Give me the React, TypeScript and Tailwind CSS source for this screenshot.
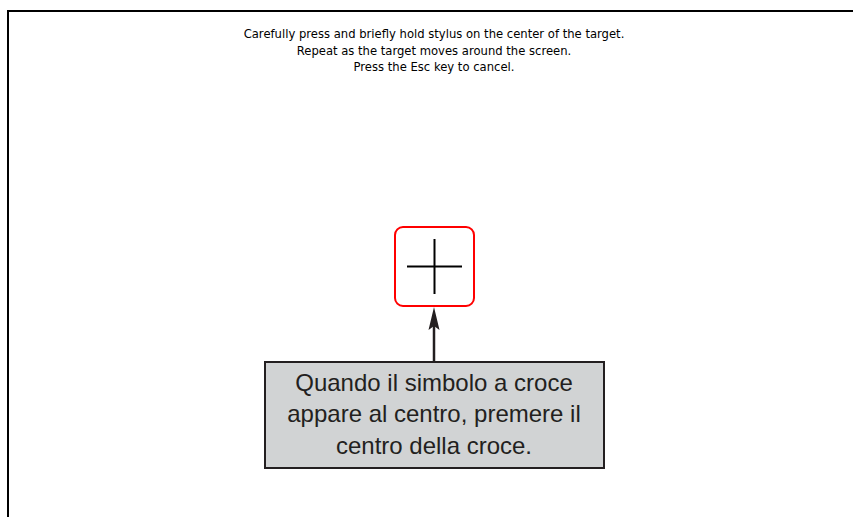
import React from "react";

export default function App() {
  return (
    <div className="w-[853px] h-[517px] bg-white pt-[10px] pl-[7px] overflow-hidden">
      <div className="h-full border-t-2 border-l-2 border-black flex flex-col items-center pl-[6px]">
        <div
          className="mt-[14px] text-center text-[11.6px] leading-[16.5px] text-black"
          style={{ fontFamily: '"DejaVu Sans", Verdana, sans-serif' }}
        >
          <div>Carefully press and briefly hold stylus on the center of the target.</div>
          <div>Repeat as the target moves around the screen.</div>
          <div>Press the Esc key to cancel.</div>
        </div>

        <div className="mt-[150px] w-[81px] h-[81px] border-2 border-[#ff0000] rounded-[9px] flex items-center justify-center">
          <svg width="55" height="55" viewBox="0 0 55 55">
            <line x1="27.5" y1="0" x2="27.5" y2="55" stroke="#000" strokeWidth="2" />
            <line x1="0" y1="27.5" x2="55" y2="27.5" stroke="#000" strokeWidth="2" />
          </svg>
        </div>

        <svg width="20" height="54" viewBox="0 0 20 54" className="block">
          <line x1="10" y1="10" x2="10" y2="54" stroke="#231f20" strokeWidth="2.5" />
          <path d="M10 0 L15.5 23 L10 19 L4.5 23 Z" fill="#231f20" />
        </svg>

        <div
          className="w-[341px] h-[108px] border-2 border-[#231f20] bg-[#d1d3d4] pt-[4px] text-center text-[24px] leading-[31.5px] text-[#231f20]"
          style={{ fontFamily: '"Liberation Sans", Arial, sans-serif' }}
        >
          <div>Quando il simbolo a croce</div>
          <div>appare al centro, premere il</div>
          <div>centro della croce.</div>
        </div>
      </div>
    </div>
  );
}
